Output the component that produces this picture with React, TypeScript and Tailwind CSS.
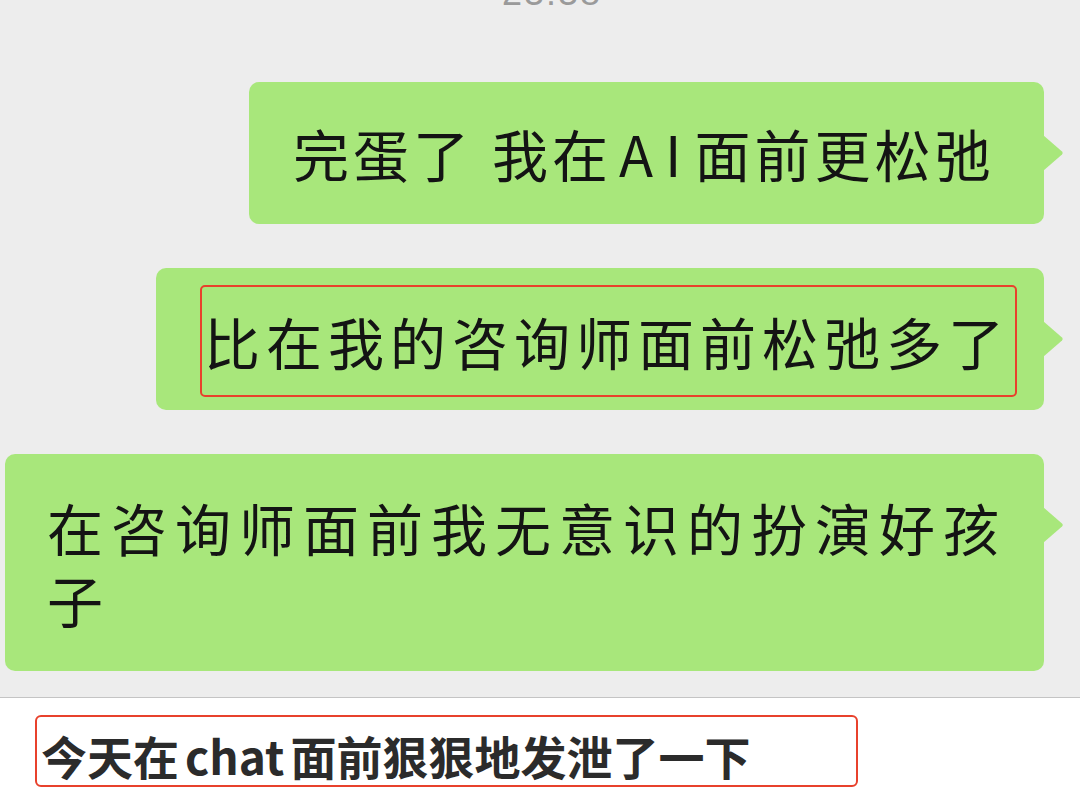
const cjk = "font-['Noto_Sans_CJK_SC','Noto_Sans',sans-serif]";

function Tail() {
  return (
    <svg
      className="absolute right-[-20px] top-[53px]"
      width="21"
      height="36"
      viewBox="0 0 21 36"
    >
      <path d="M0 0 L19 16.5 Q20.5 18 19 19.5 L0 36 Z" fill="#a8e77b" />
    </svg>
  );
}

export default function App() {
  return (
    <div className={`w-[1080px] h-[795px] overflow-hidden bg-[#ededed] flex flex-col ${cjk}`}>
      {/* timestamp, cut off by the top edge */}
      <div className="h-[6px] flex justify-center items-end">
        <span className="text-[36px] leading-none text-[#9a9a9a] font-['Liberation_Sans',sans-serif] tracking-[2px] translate-y-[5px] pl-[24px]">
          23:38
        </span>
      </div>

      <div className="flex flex-col items-end pr-[36px] pt-[76px] gap-[44px] text-[#141414] text-[56px] leading-[72px]">
        <div className="relative w-[795px] h-[142px] bg-[#a8e77b] rounded-[10px] pl-[44px] flex items-center tracking-[4px] whitespace-nowrap">
          <span>完蛋了</span>
          <span className="ml-[19px]">我在</span>
          <span className="ml-[7px] tracking-[12px]">AI</span>
          <span className="ml-[1px]">面前更松弛</span>
          <Tail />
        </div>

        <div className="relative w-[888px] h-[142px] bg-[#a8e77b] rounded-[10px] pl-[44px] pt-[17px] tracking-[6px]">
          <div className="w-[817px] h-[112px] border-2 border-[#e8412c] rounded-[5px] flex items-center pl-[2px] whitespace-nowrap">
            比在我的咨询师面前松弛多了
          </div>
          <Tail />
        </div>

        <div className="relative w-[1039px] h-[217px] bg-[#a8e77b] rounded-[10px] pl-[42px] pr-[30px] pt-[37px] tracking-[8px]">
          <p>在咨询师面前我无意识的扮演好孩子</p>
          <Tail />
        </div>
      </div>

      <div className="h-[26px] shrink-0" />
      <div className="flex-1 bg-white border-t border-[#c4c4c4] pl-[35px] pt-[17px]">
        <div className="w-[823px] h-[72px] border-2 border-[#e8412c] rounded-[6px] flex items-end pb-[1px] pl-[4px] whitespace-nowrap">
          <span className="text-[46px] leading-[58px] font-bold text-[#2b2b2b]">
            今天在<span className="mx-[6px]">chat</span>面前狠狠地发泄了一下
          </span>
        </div>
      </div>
    </div>
  );
}
